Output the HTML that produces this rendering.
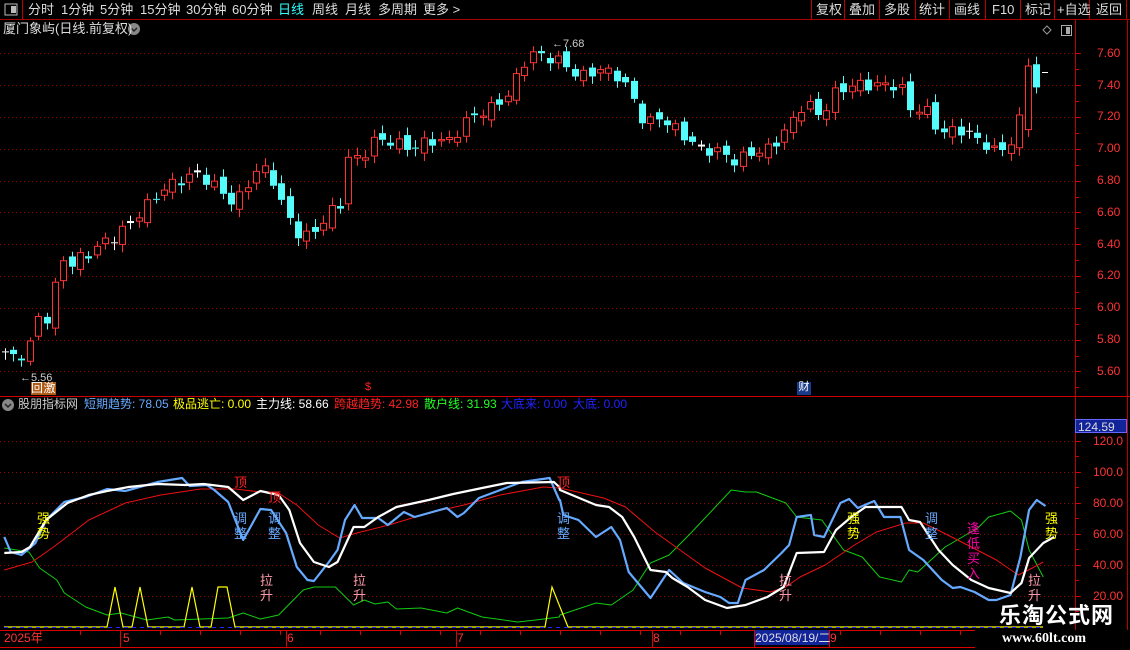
<!DOCTYPE html>
<html><head><meta charset="utf-8"><style>
html,body{margin:0;padding:0;background:#000;width:1130px;height:650px;overflow:hidden;font-family:"Liberation Sans","Noto Sans CJK SC",sans-serif;}
.t{position:absolute;white-space:nowrap;line-height:1;}
</style></head><body>
<div style="position:relative;width:1130px;height:650px;">
<svg id="s" width="1130" height="650" style="position:absolute;left:0;top:0"></svg>
<div class="t" style="left:28px;top:3px;font-size:13px;color:#ddd;">分时</div>
<div class="t" style="left:61px;top:3px;font-size:13px;color:#ddd;">1分钟</div>
<div class="t" style="left:100px;top:3px;font-size:13px;color:#ddd;">5分钟</div>
<div class="t" style="left:140px;top:3px;font-size:13px;color:#ddd;">15分钟</div>
<div class="t" style="left:186px;top:3px;font-size:13px;color:#ddd;">30分钟</div>
<div class="t" style="left:232px;top:3px;font-size:13px;color:#ddd;">60分钟</div>
<div class="t" style="left:278px;top:3px;font-size:13px;color:#3ff;">日线</div>
<div class="t" style="left:312px;top:3px;font-size:13px;color:#ddd;">周线</div>
<div class="t" style="left:345px;top:3px;font-size:13px;color:#ddd;">月线</div>
<div class="t" style="left:378px;top:3px;font-size:13px;color:#ddd;">多周期</div>
<div class="t" style="left:423px;top:3px;font-size:13px;color:#ddd;">更多 &gt;</div>
<div class="t" style="left:816px;top:3px;font-size:13px;color:#ddd;">复权</div>
<div class="t" style="left:849px;top:3px;font-size:13px;color:#ddd;">叠加</div>
<div class="t" style="left:884px;top:3px;font-size:13px;color:#ddd;">多股</div>
<div class="t" style="left:919px;top:3px;font-size:13px;color:#ddd;">统计</div>
<div class="t" style="left:954px;top:3px;font-size:13px;color:#ddd;">画线</div>
<div class="t" style="left:992px;top:3px;font-size:13px;color:#ddd;">F10</div>
<div class="t" style="left:1025px;top:3px;font-size:13px;color:#ddd;">标记</div>
<div class="t" style="left:1057px;top:3px;font-size:13px;color:#ddd;">+自选</div>
<div class="t" style="left:1096px;top:3px;font-size:13px;color:#ddd;">返回</div>
<div class="t" style="left:3px;top:22px;font-size:13px;color:#ddd;">厦门象屿(日线.前复权)</div>
<div class="t" style="left:20px;top:373px;font-size:11px;color:#ccc;">←5.56</div>
<div class="t" style="left:552px;top:39px;font-size:11px;color:#ccc;">←7.68</div>
<div class="t" style="left:31px;top:382px;width:12px;height:13px;background:#b05a14;color:#fff;font-size:12px;text-align:center;">回</div>
<div class="t" style="left:43px;top:382px;width:13px;height:13px;background:#b05a14;color:#fff;font-size:12px;text-align:center;">激</div>
<div class="t" style="left:365px;top:382px;font-size:11px;color:#f22;">$</div>
<div class="t" style="left:797px;top:382px;width:14px;height:13px;background:#1a3a8a;color:#fff;font-size:11px;text-align:center;">财</div>
<div class="t" style="left:18px;top:398px;font-size:12px;color:#ccc;">股朋指标网</div>
<div class="t" style="left:84px;top:398px;font-size:12px;color:#6af;">短期趋势: 78.05</div>
<div class="t" style="left:173px;top:398px;font-size:12px;color:#ff0;">极品逃亡: 0.00</div>
<div class="t" style="left:256px;top:398px;font-size:12px;color:#fff;">主力线: 58.66</div>
<div class="t" style="left:334px;top:398px;font-size:12px;color:#f22;">跨越趋势: 42.98</div>
<div class="t" style="left:424px;top:398px;font-size:12px;color:#2f2;">散户线: 31.93</div>
<div class="t" style="left:501px;top:398px;font-size:12px;color:#22f;">大底来: 0.00</div>
<div class="t" style="left:573px;top:398px;font-size:12px;color:#22f;">大底: 0.00</div>
<div class="t" style="left:37px;top:511px;font-size:13px;color:#ff0;width:13px;line-height:15px;white-space:normal;">强势</div>
<div class="t" style="left:234px;top:476px;font-size:13px;color:#f22;">顶</div>
<div class="t" style="left:234px;top:511px;font-size:13px;color:#6af;width:13px;line-height:15px;white-space:normal;">调整</div>
<div class="t" style="left:268px;top:491px;font-size:13px;color:#f22;">顶</div>
<div class="t" style="left:268px;top:511px;font-size:13px;color:#6af;width:13px;line-height:15px;white-space:normal;">调整</div>
<div class="t" style="left:260px;top:573px;font-size:13px;color:#f9a;width:13px;line-height:15px;white-space:normal;">拉升</div>
<div class="t" style="left:353px;top:573px;font-size:13px;color:#f9a;width:13px;line-height:15px;white-space:normal;">拉升</div>
<div class="t" style="left:557px;top:476px;font-size:13px;color:#f22;">顶</div>
<div class="t" style="left:557px;top:511px;font-size:13px;color:#6af;width:13px;line-height:15px;white-space:normal;">调整</div>
<div class="t" style="left:779px;top:573px;font-size:13px;color:#f9a;width:13px;line-height:15px;white-space:normal;">拉升</div>
<div class="t" style="left:847px;top:511px;font-size:13px;color:#ff0;width:13px;line-height:15px;white-space:normal;">强势</div>
<div class="t" style="left:925px;top:511px;font-size:13px;color:#6af;width:13px;line-height:15px;white-space:normal;">调整</div>
<div class="t" style="left:967px;top:521px;font-size:13px;color:#f0a;width:13px;line-height:15px;white-space:normal;">逢低买入</div>
<div class="t" style="left:1028px;top:573px;font-size:13px;color:#f9a;width:13px;line-height:15px;white-space:normal;">拉升</div>
<div class="t" style="left:1045px;top:511px;font-size:13px;color:#ff0;width:13px;line-height:15px;white-space:normal;">强势</div>
<div class="t" style="left:1097px;top:47px;font-size:12px;color:#f33;">7.60</div>
<div class="t" style="left:1097px;top:79px;font-size:12px;color:#f33;">7.40</div>
<div class="t" style="left:1097px;top:110px;font-size:12px;color:#f33;">7.20</div>
<div class="t" style="left:1097px;top:142px;font-size:12px;color:#f33;">7.00</div>
<div class="t" style="left:1097px;top:174px;font-size:12px;color:#f33;">6.80</div>
<div class="t" style="left:1097px;top:206px;font-size:12px;color:#f33;">6.60</div>
<div class="t" style="left:1097px;top:238px;font-size:12px;color:#f33;">6.40</div>
<div class="t" style="left:1097px;top:269px;font-size:12px;color:#f33;">6.20</div>
<div class="t" style="left:1097px;top:301px;font-size:12px;color:#f33;">6.00</div>
<div class="t" style="left:1097px;top:333px;font-size:12px;color:#f33;">5.80</div>
<div class="t" style="left:1097px;top:365px;font-size:12px;color:#f33;">5.60</div>
<div class="t" style="left:1075px;top:419px;width:52px;height:14px;background:#12249a;border:1px solid #66f;box-sizing:border-box;font-size:12px;color:#ddd;padding-top:1px;padding-left:2px;">124.59</div>
<div class="t" style="left:1093px;top:435px;font-size:12px;color:#f33;">120.0</div>
<div class="t" style="left:1093px;top:466px;font-size:12px;color:#f33;">100.0</div>
<div class="t" style="left:1093px;top:497px;font-size:12px;color:#f33;">80.00</div>
<div class="t" style="left:1093px;top:528px;font-size:12px;color:#f33;">60.00</div>
<div class="t" style="left:1093px;top:559px;font-size:12px;color:#f33;">40.00</div>
<div class="t" style="left:1093px;top:590px;font-size:12px;color:#f33;">20.00</div>
<div class="t" style="left:4px;top:632px;font-size:12px;color:#f33;">2025年</div>
<div class="t" style="left:123px;top:632px;font-size:12px;color:#f33;">5</div>
<div class="t" style="left:287px;top:632px;font-size:12px;color:#f33;">6</div>
<div class="t" style="left:457px;top:632px;font-size:12px;color:#f33;">7</div>
<div class="t" style="left:653px;top:632px;font-size:12px;color:#f33;">8</div>
<div class="t" style="left:755px;top:630px;width:74px;height:15px;background:#12249a;font-size:12px;color:#ddd;padding-top:2px;box-sizing:border-box;">2025/08/19/二</div>
<div class="t" style="left:830px;top:632px;font-size:12px;color:#f33;">9</div>
<div class="t" style="left:999px;top:605px;font-size:22px;font-weight:bold;color:#fff;letter-spacing:1px;">乐淘公式网</div>
<div class="t" style="left:1002px;top:632px;font-size:14px;font-weight:bold;color:#fff;font-family:'Liberation Serif',serif;">www.60lt.com</div>
</div>
<script>
var s=document.getElementById('s'),h='';
function L(x1,y1,x2,y2,c,w,d){h+='<line x1="'+x1+'" y1="'+y1+'" x2="'+x2+'" y2="'+y2+'" stroke="'+c+'" stroke-width="'+(w||1)+'"'+(d?' stroke-dasharray="'+d+'"':'')+'/>';}
function R(x,y,w,hh,f,st){h+='<rect x="'+x+'" y="'+y+'" width="'+w+'" height="'+hh+'" fill="'+f+'"'+(st?' stroke="'+st+'"':'')+'/>';}
L(0,19.5,1130,19.5,'#a00');
[22,811,844,879,915,949,985,1020,1054,1089,1126].forEach(function(x){L(x+.5,0,x+.5,19,'#b00');});
R(5,4,12,11,'none','#bbb');R(11,6,5,7,'#bbb');
h+='<circle cx="134" cy="29" r="6" fill="#888"/><path d="M131 28l3 3 3-3" stroke="#222" fill="none" stroke-width="1.5"/>';
h+='<circle cx="8" cy="405" r="6" fill="#888"/><path d="M5 404l3 3 3-3" stroke="#222" fill="none" stroke-width="1.5"/>';
h+='<path d="M1047 26l4 4-4 4-4-4z" stroke="#999" fill="none"/>';R(1061.5,25.5,10,10,'none','#aaa');R(1066,27,4,7,'#aaa');
L(1075.5,20,1075.5,630,'#b00');L(1127.5,20,1127.5,630,'#b00');
L(0,396.5,1130,396.5,'#c00');
for(var i=0;i<11;i++){var y=Math.round(53.3+i*31.8)+.5;L(0,y,1075,y,'#900',1,'1 3');L(1075,y,1081,y,'#c00');L(1075,y+16,1079,y+16,'#c00');}
for(var i=0;i<6;i++){var y=Math.round(441+i*30.94)+.5;L(0,y,1075,y,'#900',1,'1 3');L(1075,y,1081,y,'#c00');L(1075,y+15,1079,y+15,'#c00');}
var wp=[[5,5.72],[12,5.68],[28,5.72],[36,5.95],[44,5.9],[52,6.0],[60,6.35],[68,6.25],[76,6.3],[92,6.35],[100,6.4],[116,6.45],[124,6.5],[132,6.55],[148,6.65],[164,6.75],[180,6.8],[196,6.85],[212,6.78],[235,6.65],[250,6.8],[258,6.88],[270,6.85],[285,6.6],[300,6.45],[310,6.45],[330,6.6],[340,6.65],[350,7.0],[360,6.9],[370,7.05],[390,7.05],[410,7.0],[430,7.05],[450,7.05],[470,7.2],[490,7.25],[510,7.35],[520,7.5],[530,7.6],[545,7.58],[560,7.55],[580,7.45],[600,7.5],[620,7.45],[630,7.35],[645,7.15],[660,7.2],[680,7.1],[700,7.0],[720,6.98],[735,6.92],[750,6.97],[770,7.0],[790,7.15],[805,7.3],[820,7.2],[835,7.35],[850,7.4],[900,7.4],[910,7.25],[925,7.25],[940,7.1],[960,7.12],[980,7.05],[995,6.98],[1010,7.03],[1018,7.12],[1026,7.5],[1036,7.38]];
function ip(x){for(var k=0;k<wp.length-1;k++){if(x<=wp[k+1][0]){var a=wp[k],b=wp[k+1];return a[1]+(b[1]-a[1])*(x-a[0])/(b[0]-a[0]);}}return wp[wp.length-1][1];}
function PY(p){return 53.3+(7.6-p)*159;}
var N=124,st=1031.4/123,pc=5.7;
for(var i=0;i<N;i++){var x=4.6+i*st;var c=ip(x)+0.035*Math.sin(i*2.3);var o=pc+0.03*Math.sin(i*1.7+1);if(i==N-2){o=7.12;c=7.52;}
var hi=Math.max(o,c)+0.02+0.03*Math.abs(Math.sin(i*3.1)),lo=Math.min(o,c)-0.02-0.03*Math.abs(Math.cos(i*2.7));
var xi=Math.round(x)+.5,yt=PY(Math.max(o,c)),yb=PY(Math.min(o,c));
var col=c>=o?'#ff3232':'#54fcfc';if(Math.abs(c-o)<0.006)col='#fff';
L(xi,PY(hi),xi,yt,col);L(xi,yb,xi,PY(lo),col);
var bh=Math.max(1,yb-yt);
if(c>=o)R(xi-3,yt,6,bh,'#000',col);else R(xi-3.5,yt,7,bh,col);
pc=c;}
L(1042,72.5,1048,72.5,'#fff');
function A(a){return a.map(function(p){return [p[0]*1.0714,p[1]];});}
function B(a){return a.map(function(p){return [560+(p[0]-560)*1.0909,p[1]];});}
function PL(pts,c,w){h+='<polyline fill="none" stroke="'+c+'" stroke-width="'+w+'" stroke-linejoin="round" points="'+pts.map(function(p){return p[0].toFixed(1)+','+p[1];}).join(' ')+'"/>';}
var green=A([[4,548],[27,552],[37,568],[53,580],[60,593],[80,607],[100,615],[113,613],[137,620],[157,617],[163,620],[213,618],[227,613],[243,619],[260,615],[283,590],[293,587],[313,587],[330,605],[340,600],[350,604],[362,602],[370,609],[393,608],[417,613],[427,608],[450,617],[483,622],[500,620],[522,617]]).concat(B([[560,615],[593,603],[607,605],[627,590],[643,563],[660,555],[680,533],[717,490],[730,492],[740,492],[767,503],[777,517],[800,520],[820,550],[837,557],[853,577],[873,582],[880,570],[888,572],[913,547],[943,528],[953,517],[973,511],[983,520],[990,550],[1003,577]]));
var red=A([[4,570],[30,562],[50,547],[83,520],[117,503],[150,495],[187,489],[220,489],[243,492],[260,493],[277,505],[297,525],[317,538],[333,533],[363,525],[400,513],[433,505],[467,495],[507,487],[522,488]]).concat(B([[560,488],[600,498],[620,507],[647,532],[693,568],[727,588],[753,592],[767,587],[780,577],[803,565],[830,545],[850,532],[877,523],[893,523],[910,532],[937,547],[960,560],[980,575],[993,568],[1003,562]]));
var blue=A([[4,537],[10,552],[20,555],[33,543],[43,520],[60,502],[80,497],[100,489],[117,491],[147,482],[170,478],[177,486],[193,485],[200,490],[213,502],[227,540],[243,509],[253,510],[267,533],[277,567],[287,580],[293,581],[307,562],[315,550],[322,520],[331,505],[338,518],[353,518],[362,525],[377,512],[387,517],[417,508],[427,517],[433,513],[447,498],[467,490],[487,482],[513,478],[522,500]]).concat(B([[560,500],[563,515],[577,520],[593,537],[607,527],[615,540],[623,572],[643,598],[660,570],[673,583],[693,592],[707,597],[715,603],[723,603],[730,580],[747,570],[763,553],[770,545],[777,517],[790,515],[793,535],[802,537],[817,503],[825,499],[833,508],[848,501],[857,517],[872,517],[880,550],[893,560],[910,580],[920,588],[927,587],[940,592],[953,600],[960,600],[973,595],[982,557],[990,510],[997,500],[1005,506]]));
var white=A([[4,553],[20,552],[28,547],[43,520],[63,503],[83,495],[100,491],[120,487],[147,484],[173,485],[190,484],[213,487],[227,500],[243,491],[260,495],[270,510],[280,543],[293,562],[307,567],[315,562],[330,527],[340,527],[353,517],[370,507],[400,500],[423,494],[450,488],[473,483],[517,482],[522,487]]).concat(B([[560,490],[593,505],[605,507],[617,517],[628,537],[643,570],[657,572],[663,578],[677,587],[693,600],[713,608],[730,605],[750,597],[765,587],[777,553],[802,552],[813,530],[827,517],[840,507],[873,507],[880,520],[890,522],[907,550],[920,565],[937,580],[953,588],[973,593],[983,583],[990,558],[1003,543],[1013,537]]));
PL(green,'#1c1',1);PL(red,'#e11',1);PL(blue,'#6af',2.2);PL(white,'#fff',2.2);
var yl='4,627';[[107,115,123],[132,140,148],[184,192,200]].forEach(function(s){yl+=' '+s[0]+',627 '+s[1]+',587 '+s[2]+',627';});
yl+=' 211,627 218,587 227,587 235,627 545,627 552,587 568,627 1043,627';
h+='<polyline fill="none" stroke="#ff0" stroke-width="1.2" points="'+yl+'"/>';
L(4,627.5,1043,627.5,'#22f',1,'4 4');
L(0,630.5,975,630.5,'#d00');L(0,647.5,975,647.5,'#d00');
[120,286,456,652,754,829].forEach(function(x){L(x+.5,630,x+.5,648,'#d00');});
for(var x=40;x<975;x+=40)L(x+.5,631,x+.5,635,'#d00');
s.innerHTML=h;
</script>
</body></html>
